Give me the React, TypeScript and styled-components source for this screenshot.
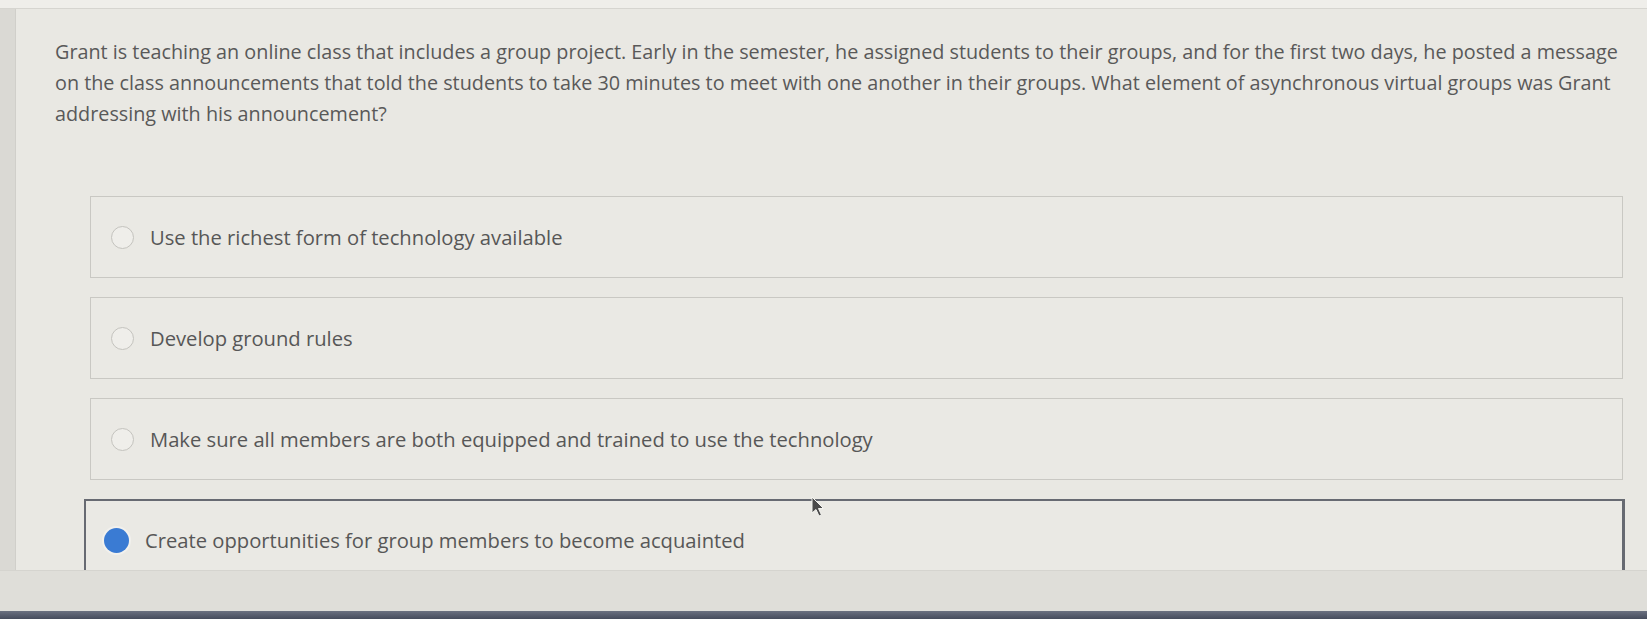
import React from "react";
import styled, { createGlobalStyle } from "styled-components";

const GlobalStyle = createGlobalStyle`
  html, body {
    margin: 0;
    padding: 0;
    background: #e7e6e1;
    overflow: hidden;
  }
  * { box-sizing: border-box; }
`;

const Screen = styled.div`
  position: relative;
  width: 1647px;
  height: 619px;
  display: flex;
  flex-direction: column;
  font-family: "Open Sans", "Noto Sans", sans-serif;
  color: #5b5b5b;
  overflow: hidden;
`;

const TopStrip = styled.div`
  height: 9px;
  flex-shrink: 0;
  background: #efeeea;
  border-bottom: 1px solid #d6d5d0;
`;

const Body = styled.div`
  display: flex;
  height: 561px;
  flex-shrink: 0;
`;

const LeftRail = styled.div`
  width: 16px;
  flex-shrink: 0;
  background: #dad9d4;
  border-right: 1px solid #d0cfca;
`;

const Content = styled.div`
  flex: 1;
  padding: 27px 24px 0 39px;
  overflow: hidden;
  background: #e9e8e3;
`;

const Question = styled.p`
  margin: 0;
  font-size: 19.8px;
  line-height: 31px;
  color: #595959;
  max-width: 1580px;
`;

const Options = styled.div`
  display: flex;
  flex-direction: column;
  gap: 19px;
  margin: 67px 0 0 35px;
`;

const Option = styled.div<{ $selected?: boolean }>`
  height: 82px;
  flex-shrink: 0;
  display: flex;
  align-items: center;
  gap: 16px;
  padding-left: ${(p) => (p.$selected ? "18px" : "20px")};
  background: #eae9e4;
  border: ${(p) => (p.$selected ? "2px solid #676a72" : "1px solid #c9c8c3")};
  ${(p) => (p.$selected ? "margin-left: -6px; margin-right: -2px; border-right-width: 3px;" : "")}
  font-size: 20.2px;
  color: #575757;
`;

const Radio = styled.span<{ $checked?: boolean }>`
  width: ${(p) => (p.$checked ? "25px" : "23px")};
  height: ${(p) => (p.$checked ? "25px" : "23px")};
  flex-shrink: 0;
  border-radius: 50%;
  border: ${(p) => (p.$checked ? "none" : "1.5px solid #c4c3be")};
  background: ${(p) => (p.$checked ? "#3a7bd3" : "#efeeea")};
  box-shadow: ${(p) => (p.$checked ? "0 0 0 2px #f2f1ed" : "none")};
`;

const Footer = styled.div`
  flex: 1;
  background: #dfded9;
  border-top: 1px solid #d5d4cf;
  display: flex;
  flex-direction: column;
  justify-content: flex-end;
`;

const Taskbar = styled.div`
  height: 8px;
  background: linear-gradient(#6b7180, #464c5c);
`;

const Cursor = styled.svg`
  position: absolute;
  left: 811px;
  top: 496px;
`;

const options = [
  "Use the richest form of technology available",
  "Develop ground rules",
  "Make sure all members are both equipped and trained to use the technology",
  "Create opportunities for group members to become acquainted",
];

export default function App() {
  return (
    <Screen>
      <GlobalStyle />
      <TopStrip />
      <Body>
        <LeftRail />
        <Content>
          <Question>
            Grant is teaching an online class that includes a group project. Early in the semester, he assigned
            students to their groups, and for the first two days, he posted a message on the class announcements
            that told the students to take 30 minutes to meet with one another in their groups. What element of
            asynchronous virtual groups was Grant addressing with his announcement?
          </Question>
          <Options>
            {options.map((text, i) => (
              <Option key={text} $selected={i === 3}>
                <Radio $checked={i === 3} />
                {text}
              </Option>
            ))}
          </Options>
        </Content>
      </Body>
      <Footer>
        <Taskbar />
      </Footer>
      <Cursor width="14" height="22" viewBox="0 0 14 22">
        <path d="M1 1 L1 17 L5 13.5 L8 20 L10.5 19 L7.5 12.5 L12.5 12.5 Z" fill="#4a4a4a" stroke="#f4f4f0" strokeWidth="1" />
      </Cursor>
    </Screen>
  );
}
